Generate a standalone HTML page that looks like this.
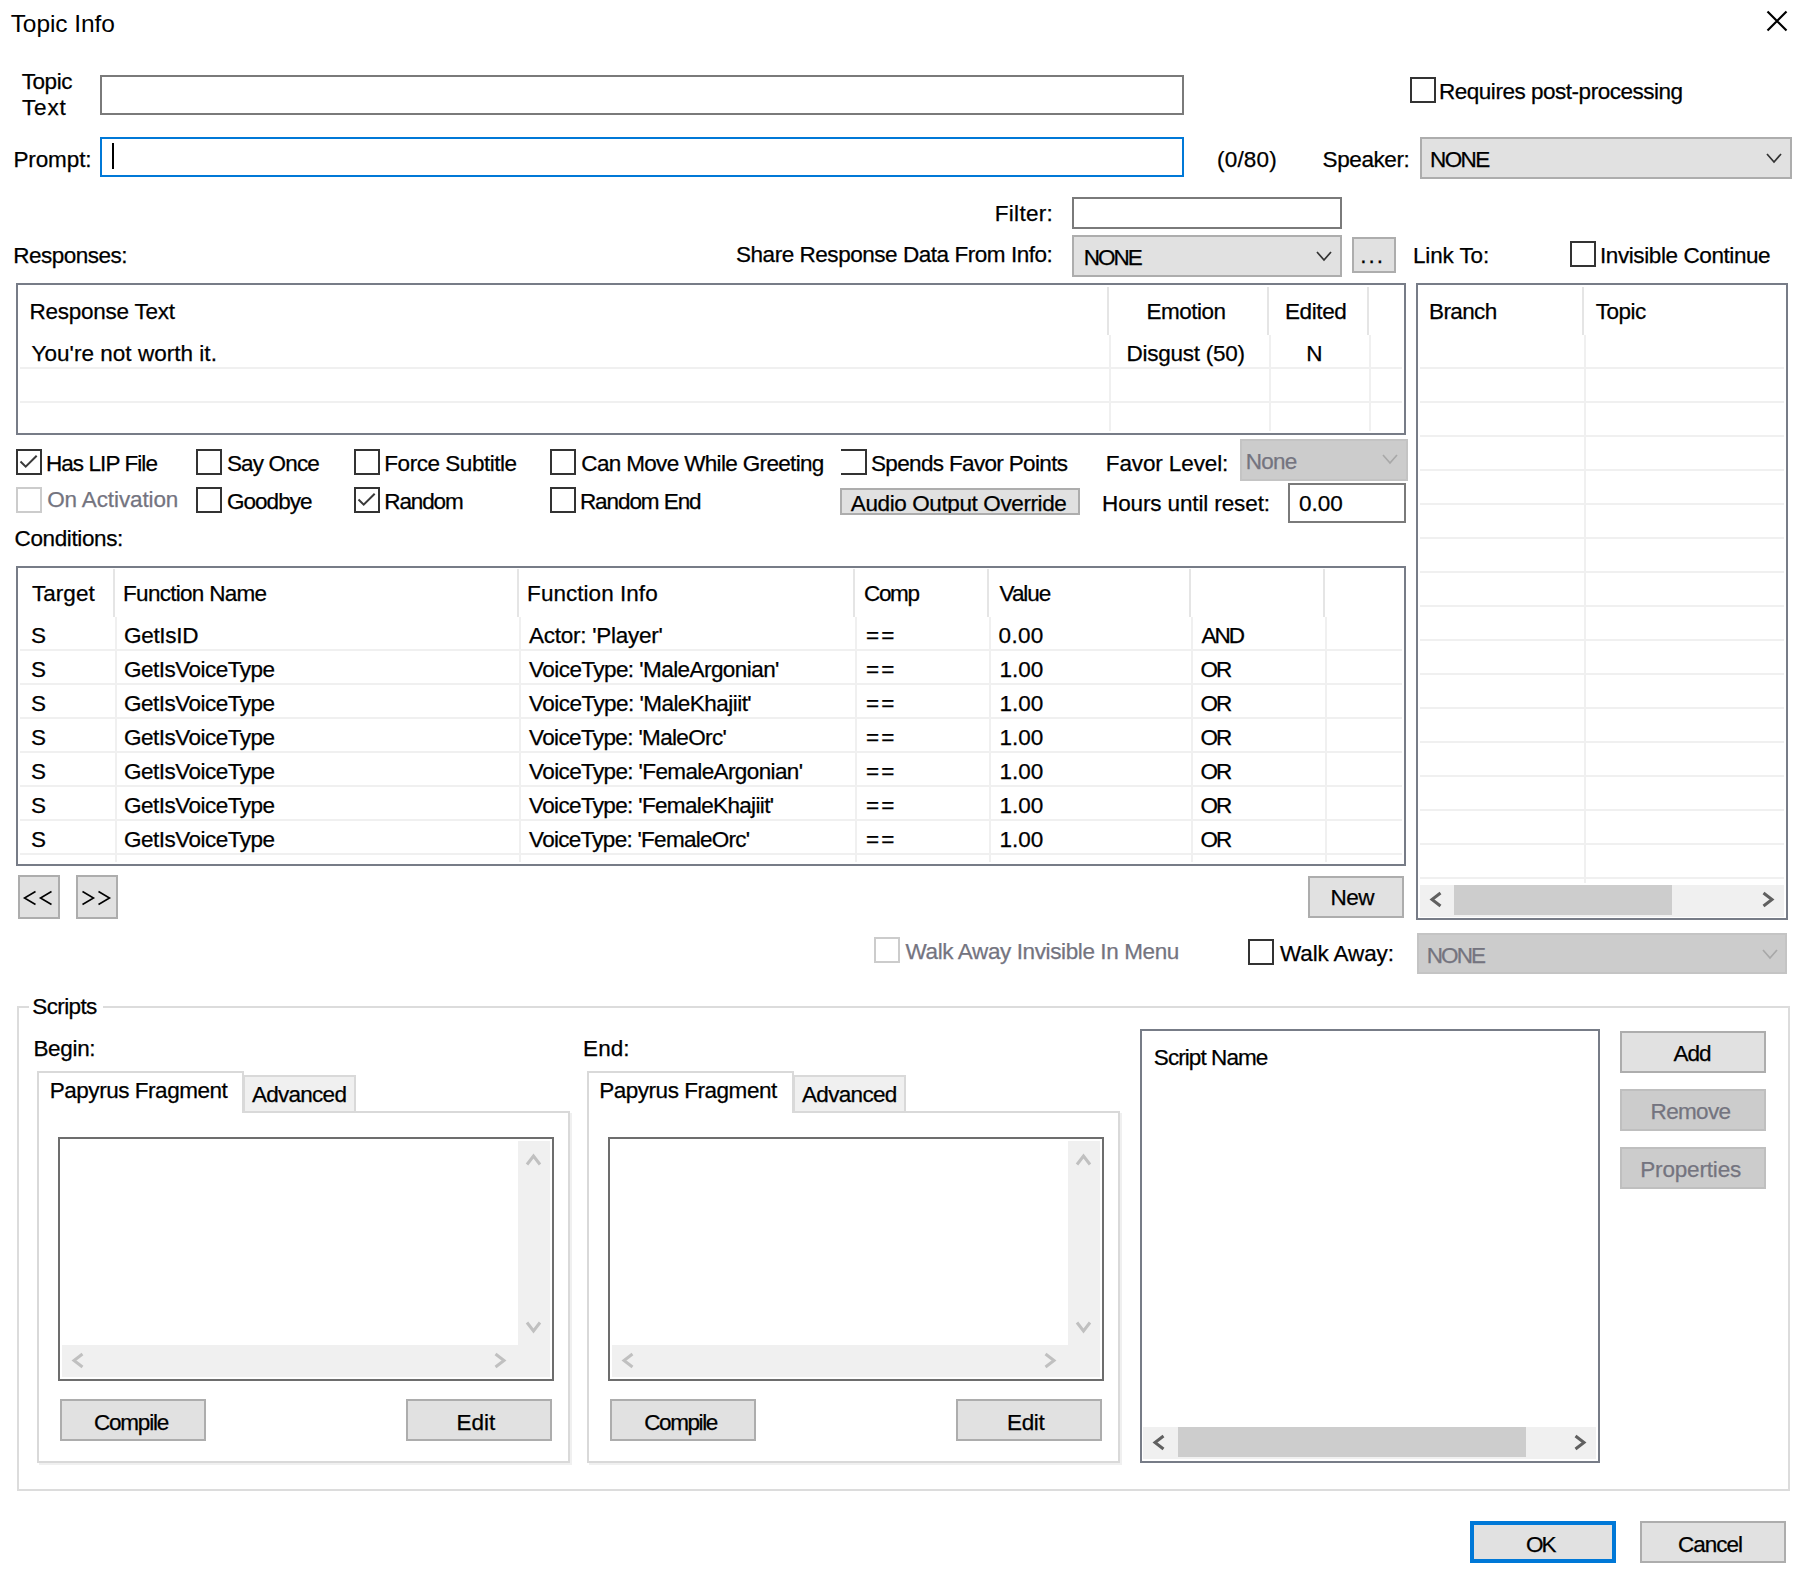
<!DOCTYPE html>
<html><head><meta charset="utf-8"><title>Topic Info</title><style>
html,body{margin:0;padding:0;background:#fff;}
body{width:1802px;height:1585px;position:relative;overflow:hidden;font-family:"Liberation Sans",sans-serif;color:#000;}
.t{position:absolute;font-size:22.5px;line-height:23px;white-space:pre;-webkit-text-stroke-width:0.25px;}
.b{position:absolute;box-sizing:border-box;}
svg.b{overflow:visible;}
</style></head><body>
<div class="t" style="left:10.7px;top:11.2px;font-size:24.5px;line-height:25px;letter-spacing:-0.08px;-webkit-text-stroke-width:0">Topic Info</div>
<svg class="b" style="left:1766px;top:10px" width="22" height="22"><path d="M1.5,1.5 L20.5,20.5 M20.5,1.5 L1.5,20.5" stroke="#000" stroke-width="2.2" fill="none"/></svg>
<div class="b" style="left:100px;top:75px;width:1084px;height:40px;background:#fff;border:2px solid #7a7a7a;"></div>
<div class="b" style="left:1410px;top:77px;width:26px;height:26px;background:#fff;border:2px solid #333333;"></div>
<div class="b" style="left:100px;top:137px;width:1084px;height:40px;background:#fff;border:2px solid #0078d7;"></div>
<div class="b" style="left:112px;top:143px;width:2px;height:26px;background:#000"></div>
<div class="b" style="left:1420px;top:137px;width:372px;height:42px;background:#e1e1e1;border:2px solid #adadad;"></div>
<svg class="b" style="left:1766px;top:153px" width="16" height="11"><polyline points="1,1 8.0,9 15,1" fill="none" stroke="#333" stroke-width="1.7"/></svg>
<div class="b" style="left:1072px;top:197px;width:270px;height:32px;background:#fff;border:2px solid #7a7a7a;"></div>
<div class="b" style="left:1072px;top:235px;width:270px;height:42px;background:#e1e1e1;border:2px solid #adadad;"></div>
<svg class="b" style="left:1316px;top:251px" width="16" height="11"><polyline points="1,1 8.0,9 15,1" fill="none" stroke="#333" stroke-width="1.7"/></svg>
<div class="b" style="left:1352px;top:237px;width:44px;height:36px;background:#e1e1e1;border:2px solid #adadad;"></div>
<div class="b" style="left:1570px;top:241px;width:26px;height:26px;background:#fff;border:2px solid #333333;"></div>
<div class="b" style="left:16px;top:283px;width:1390px;height:152px;background:#fff;border:2px solid #777c87;"></div>
<div class="b" style="left:1107px;top:287px;width:2px;height:48px;background:#e5e5e5"></div>
<div class="b" style="left:1267px;top:287px;width:2px;height:48px;background:#e5e5e5"></div>
<div class="b" style="left:1367px;top:287px;width:2px;height:48px;background:#e5e5e5"></div>
<div class="b" style="left:1109px;top:335px;width:2px;height:96px;background:#f0f0f0"></div>
<div class="b" style="left:1269px;top:335px;width:2px;height:96px;background:#f0f0f0"></div>
<div class="b" style="left:1369px;top:335px;width:2px;height:96px;background:#f0f0f0"></div>
<div class="b" style="left:20px;top:367px;width:1382px;height:2px;background:#f0f0f0"></div>
<div class="b" style="left:20px;top:401px;width:1382px;height:2px;background:#f0f0f0"></div>
<div class="b" style="left:16px;top:449px;width:26px;height:26px;background:#fff;border:2px solid #333333;"></div>
<svg class="b" style="left:16px;top:449px" width="26" height="26"><polyline points="4.5,12.5 9.7,17.7 20.7,6.7" fill="none" stroke="#3a3a3a" stroke-width="2"/></svg>
<div class="b" style="left:196px;top:449px;width:26px;height:26px;background:#fff;border:2px solid #333333;"></div>
<div class="b" style="left:354px;top:449px;width:26px;height:26px;background:#fff;border:2px solid #333333;"></div>
<div class="b" style="left:550px;top:449px;width:26px;height:26px;background:#fff;border:2px solid #333333;"></div>
<div class="b" style="left:841px;top:449px;width:26px;height:26px;background:#fff;border:2px solid #333333;border-left:none;"></div>
<div class="b" style="left:1240px;top:439px;width:168px;height:42px;background:#cccccc;border:2px solid #c4c4c4;"></div>
<svg class="b" style="left:1382px;top:454px" width="16" height="11"><polyline points="1,1 8.0,9 15,1" fill="none" stroke="#a8a8a8" stroke-width="1.7"/></svg>
<div class="b" style="left:16px;top:487px;width:26px;height:26px;background:#fff;border:2px solid #cccccc;"></div>
<div class="b" style="left:196px;top:487px;width:26px;height:26px;background:#fff;border:2px solid #333333;"></div>
<div class="b" style="left:354px;top:487px;width:26px;height:26px;background:#fff;border:2px solid #333333;"></div>
<svg class="b" style="left:354px;top:487px" width="26" height="26"><polyline points="4.5,12.5 9.7,17.7 20.7,6.7" fill="none" stroke="#3a3a3a" stroke-width="2"/></svg>
<div class="b" style="left:550px;top:487px;width:26px;height:26px;background:#fff;border:2px solid #333333;"></div>
<div class="b" style="left:840px;top:488px;width:240px;height:27px;background:#e1e1e1;border:2px solid #adadad;"></div>
<div class="b" style="left:1288px;top:483px;width:118px;height:40px;background:#fff;border:2px solid #7a7a7a;"></div>
<div class="b" style="left:16px;top:566px;width:1390px;height:300px;background:#fff;border:2px solid #777c87;"></div>
<div class="b" style="left:113px;top:569px;width:2px;height:48px;background:#e5e5e5"></div>
<div class="b" style="left:517px;top:569px;width:2px;height:48px;background:#e5e5e5"></div>
<div class="b" style="left:853px;top:569px;width:2px;height:48px;background:#e5e5e5"></div>
<div class="b" style="left:987px;top:569px;width:2px;height:48px;background:#e5e5e5"></div>
<div class="b" style="left:1189px;top:569px;width:2px;height:48px;background:#e5e5e5"></div>
<div class="b" style="left:1323px;top:569px;width:2px;height:48px;background:#e5e5e5"></div>
<div class="b" style="left:115px;top:617px;width:2px;height:245px;background:#f0f0f0"></div>
<div class="b" style="left:519px;top:617px;width:2px;height:245px;background:#f0f0f0"></div>
<div class="b" style="left:855px;top:617px;width:2px;height:245px;background:#f0f0f0"></div>
<div class="b" style="left:989px;top:617px;width:2px;height:245px;background:#f0f0f0"></div>
<div class="b" style="left:1191px;top:617px;width:2px;height:245px;background:#f0f0f0"></div>
<div class="b" style="left:1325px;top:617px;width:2px;height:245px;background:#f0f0f0"></div>
<div class="b" style="left:20px;top:649px;width:1382px;height:2px;background:#f0f0f0"></div>
<div class="b" style="left:20px;top:683px;width:1382px;height:2px;background:#f0f0f0"></div>
<div class="b" style="left:20px;top:717px;width:1382px;height:2px;background:#f0f0f0"></div>
<div class="b" style="left:20px;top:751px;width:1382px;height:2px;background:#f0f0f0"></div>
<div class="b" style="left:20px;top:785px;width:1382px;height:2px;background:#f0f0f0"></div>
<div class="b" style="left:20px;top:819px;width:1382px;height:2px;background:#f0f0f0"></div>
<div class="b" style="left:20px;top:853px;width:1382px;height:2px;background:#f0f0f0"></div>
<div class="b" style="left:18px;top:875px;width:42px;height:44px;background:#e1e1e1;border:2px solid #adadad;"></div>
<div class="b" style="left:76px;top:875px;width:42px;height:44px;background:#e1e1e1;border:2px solid #adadad;"></div>
<svg class="b" style="left:18px;top:875px" width="100" height="44"><g fill="none" stroke="#000" stroke-width="1.6"><polyline points="17.5,16.5 6.5,23 17.5,29.5"/><polyline points="33.5,16.5 22.5,23 33.5,29.5"/><polyline points="64.5,16.5 75.5,23 64.5,29.5"/><polyline points="80.5,16.5 91.5,23 80.5,29.5"/></g></svg>
<div class="b" style="left:1308px;top:876px;width:96px;height:42px;background:#e1e1e1;border:2px solid #adadad;"></div>
<div class="b" style="left:1416px;top:283px;width:372px;height:637px;background:#fff;border:2px solid #777c87;"></div>
<div class="b" style="left:1582px;top:287px;width:2px;height:48px;background:#e5e5e5"></div>
<div class="b" style="left:1584px;top:335px;width:2px;height:548px;background:#f0f0f0"></div>
<div class="b" style="left:1420px;top:367px;width:364px;height:2px;background:#f0f0f0"></div>
<div class="b" style="left:1420px;top:401px;width:364px;height:2px;background:#f0f0f0"></div>
<div class="b" style="left:1420px;top:435px;width:364px;height:2px;background:#f0f0f0"></div>
<div class="b" style="left:1420px;top:469px;width:364px;height:2px;background:#f0f0f0"></div>
<div class="b" style="left:1420px;top:503px;width:364px;height:2px;background:#f0f0f0"></div>
<div class="b" style="left:1420px;top:537px;width:364px;height:2px;background:#f0f0f0"></div>
<div class="b" style="left:1420px;top:571px;width:364px;height:2px;background:#f0f0f0"></div>
<div class="b" style="left:1420px;top:605px;width:364px;height:2px;background:#f0f0f0"></div>
<div class="b" style="left:1420px;top:639px;width:364px;height:2px;background:#f0f0f0"></div>
<div class="b" style="left:1420px;top:673px;width:364px;height:2px;background:#f0f0f0"></div>
<div class="b" style="left:1420px;top:707px;width:364px;height:2px;background:#f0f0f0"></div>
<div class="b" style="left:1420px;top:741px;width:364px;height:2px;background:#f0f0f0"></div>
<div class="b" style="left:1420px;top:775px;width:364px;height:2px;background:#f0f0f0"></div>
<div class="b" style="left:1420px;top:809px;width:364px;height:2px;background:#f0f0f0"></div>
<div class="b" style="left:1420px;top:843px;width:364px;height:2px;background:#f0f0f0"></div>
<div class="b" style="left:1420px;top:877px;width:364px;height:2px;background:#f0f0f0"></div>
<div class="b" style="left:1420px;top:885px;width:364px;height:32px;background:#f0f0f0"></div>
<div class="b" style="left:1454px;top:885px;width:218px;height:30px;background:#cdcdcd"></div>
<svg class="b" style="left:1430px;top:892px" width="12" height="15"><polyline points="10.5,1 2,7.5 10.5,14" fill="none" stroke="#606060" stroke-width="3"/></svg>
<svg class="b" style="left:1762px;top:892px" width="12" height="15"><polyline points="1.5,1 10,7.5 1.5,14" fill="none" stroke="#606060" stroke-width="3"/></svg>
<div class="b" style="left:874px;top:937px;width:26px;height:26px;background:#fff;border:2px solid #cccccc;"></div>
<div class="b" style="left:1248px;top:939px;width:26px;height:26px;background:#fff;border:2px solid #333333;"></div>
<div class="b" style="left:1417px;top:933px;width:370px;height:41px;background:#cccccc;border:2px solid #c4c4c4;"></div>
<svg class="b" style="left:1762px;top:949px" width="16" height="11"><polyline points="1,1 8.0,9 15,1" fill="none" stroke="#a8a8a8" stroke-width="1.7"/></svg>
<div class="b" style="left:17px;top:1006px;width:1773px;height:485px;background:transparent;border:2px solid #dcdcdc;"></div>
<div class="b" style="left:29px;top:995px;width:74px;height:15px;background:#fff"></div>
<div class="b" style="left:37px;top:1111px;width:533px;height:352px;background:transparent;border:2px solid #d9d9d9;box-shadow:2px 2px 0 #f0f0f0;"></div>
<div class="b" style="left:243px;top:1075px;width:113px;height:38px;background:#f0f0f0;border:2px solid #d9d9d9;"></div>
<div class="b" style="left:37px;top:1071px;width:207px;height:42px;background:#fff;border:2px solid #d9d9d9;border-bottom:none"></div>
<div class="b" style="left:58px;top:1137px;width:496px;height:244px;background:#fff;border:2px solid #6d6d6d;"></div>
<div class="b" style="left:518px;top:1141px;width:32px;height:236px;background:#f0f0f0"></div>
<div class="b" style="left:62px;top:1345px;width:488px;height:32px;background:#f0f0f0"></div>
<svg class="b" style="left:526px;top:1154px" width="15" height="12"><polyline points="1,10.5 7.5,2 14,10.5" fill="none" stroke="#c0c0c0" stroke-width="3"/></svg>
<svg class="b" style="left:526px;top:1321px" width="15" height="12"><polyline points="1,1.5 7.5,10 14,1.5" fill="none" stroke="#c0c0c0" stroke-width="3"/></svg>
<svg class="b" style="left:72px;top:1353px" width="12" height="15"><polyline points="10.5,1 2,7.5 10.5,14" fill="none" stroke="#c0c0c0" stroke-width="3"/></svg>
<svg class="b" style="left:494px;top:1353px" width="12" height="15"><polyline points="1.5,1 10,7.5 1.5,14" fill="none" stroke="#c0c0c0" stroke-width="3"/></svg>
<div class="b" style="left:60px;top:1399px;width:146px;height:42px;background:#e1e1e1;border:2px solid #adadad;"></div>
<div class="b" style="left:406px;top:1399px;width:146px;height:42px;background:#e1e1e1;border:2px solid #adadad;"></div>
<div class="b" style="left:587px;top:1111px;width:533px;height:352px;background:transparent;border:2px solid #d9d9d9;box-shadow:2px 2px 0 #f0f0f0;"></div>
<div class="b" style="left:793px;top:1075px;width:113px;height:38px;background:#f0f0f0;border:2px solid #d9d9d9;"></div>
<div class="b" style="left:587px;top:1071px;width:207px;height:42px;background:#fff;border:2px solid #d9d9d9;border-bottom:none"></div>
<div class="b" style="left:608px;top:1137px;width:496px;height:244px;background:#fff;border:2px solid #6d6d6d;"></div>
<div class="b" style="left:1068px;top:1141px;width:32px;height:236px;background:#f0f0f0"></div>
<div class="b" style="left:612px;top:1345px;width:488px;height:32px;background:#f0f0f0"></div>
<svg class="b" style="left:1076px;top:1154px" width="15" height="12"><polyline points="1,10.5 7.5,2 14,10.5" fill="none" stroke="#c0c0c0" stroke-width="3"/></svg>
<svg class="b" style="left:1076px;top:1321px" width="15" height="12"><polyline points="1,1.5 7.5,10 14,1.5" fill="none" stroke="#c0c0c0" stroke-width="3"/></svg>
<svg class="b" style="left:622px;top:1353px" width="12" height="15"><polyline points="10.5,1 2,7.5 10.5,14" fill="none" stroke="#c0c0c0" stroke-width="3"/></svg>
<svg class="b" style="left:1044px;top:1353px" width="12" height="15"><polyline points="1.5,1 10,7.5 1.5,14" fill="none" stroke="#c0c0c0" stroke-width="3"/></svg>
<div class="b" style="left:610px;top:1399px;width:146px;height:42px;background:#e1e1e1;border:2px solid #adadad;"></div>
<div class="b" style="left:956px;top:1399px;width:146px;height:42px;background:#e1e1e1;border:2px solid #adadad;"></div>
<div class="b" style="left:1140px;top:1029px;width:460px;height:434px;background:#fff;border:2px solid #777c87;"></div>
<div class="b" style="left:1143px;top:1427px;width:453px;height:32px;background:#f0f0f0"></div>
<div class="b" style="left:1178px;top:1427px;width:348px;height:30px;background:#cdcdcd"></div>
<svg class="b" style="left:1153px;top:1435px" width="12" height="15"><polyline points="10.5,1 2,7.5 10.5,14" fill="none" stroke="#606060" stroke-width="3"/></svg>
<svg class="b" style="left:1574px;top:1435px" width="12" height="15"><polyline points="1.5,1 10,7.5 1.5,14" fill="none" stroke="#606060" stroke-width="3"/></svg>
<div class="b" style="left:1620px;top:1031px;width:146px;height:42px;background:#e1e1e1;border:2px solid #adadad;"></div>
<div class="b" style="left:1620px;top:1089px;width:146px;height:42px;background:#cccccc;border:2px solid #bfbfbf;"></div>
<div class="b" style="left:1620px;top:1147px;width:146px;height:42px;background:#cccccc;border:2px solid #bfbfbf;"></div>
<div class="b" style="left:1470px;top:1521px;width:146px;height:42px;background:#e1e1e1;border:4px solid #0078d7;"></div>
<div class="b" style="left:1640px;top:1521px;width:146px;height:42px;background:#e1e1e1;border:2px solid #adadad;"></div>
<div class="t" style="left:21.8px;top:70.0px;letter-spacing:-0.47px;">Topic</div>
<div class="t" style="left:22.0px;top:96.0px;letter-spacing:0.87px;">Text</div>
<div class="t" style="left:13.4px;top:148.0px;letter-spacing:-0.10px;">Prompt:</div>
<div class="t" style="left:1439.0px;top:80.0px;letter-spacing:-0.48px;">Requires post-processing</div>
<div class="t" style="left:1217.0px;top:147.5px;letter-spacing:0.20px;">(0/80)</div>
<div class="t" style="left:1322.6px;top:147.5px;letter-spacing:-0.41px;">Speaker:</div>
<div class="t" style="left:1430.0px;top:148.0px;letter-spacing:-1.60px;">NONE</div>
<div class="t" style="left:994.7px;top:202.0px;letter-spacing:0.32px;">Filter:</div>
<div class="t" style="left:13.3px;top:244.0px;letter-spacing:-0.51px;">Responses:</div>
<div class="t" style="left:736.0px;top:243.0px;letter-spacing:-0.46px;">Share Response Data From Info:</div>
<div class="t" style="left:1083.8px;top:246.0px;letter-spacing:-2.00px;">NONE</div>
<div class="t" style="left:1360.3px;top:244.0px;letter-spacing:2.00px;">...</div>
<div class="t" style="left:1413.0px;top:243.5px;letter-spacing:-0.14px;">Link To:</div>
<div class="t" style="left:1600.0px;top:243.5px;letter-spacing:-0.41px;">Invisible Continue</div>
<div class="t" style="left:29.5px;top:300.0px;letter-spacing:-0.25px;">Response Text</div>
<div class="t" style="left:1146.6px;top:300.0px;letter-spacing:-0.50px;">Emotion</div>
<div class="t" style="left:1285.0px;top:300.0px;letter-spacing:-0.40px;">Edited</div>
<div class="t" style="left:31.5px;top:341.5px;letter-spacing:0.03px;">You&#x27;re not worth it.</div>
<div class="t" style="left:1126.5px;top:341.5px;letter-spacing:-0.25px;">Disgust (50)</div>
<div class="t" style="left:1306.3px;top:341.5px;letter-spacing:0.00px;">N</div>
<div class="t" style="left:45.9px;top:452.0px;letter-spacing:-0.92px;">Has LIP File</div>
<div class="t" style="left:226.9px;top:452.0px;letter-spacing:-0.84px;">Say Once</div>
<div class="t" style="left:384.3px;top:452.0px;letter-spacing:-0.46px;">Force Subtitle</div>
<div class="t" style="left:581.3px;top:452.0px;letter-spacing:-0.66px;">Can Move While Greeting</div>
<div class="t" style="left:871.0px;top:452.0px;letter-spacing:-0.66px;">Spends Favor Points</div>
<div class="t" style="left:1105.8px;top:452.0px;letter-spacing:-0.12px;">Favor Level:</div>
<div class="t" style="left:1245.8px;top:450.0px;letter-spacing:-0.77px;color:#74747f;">None</div>
<div class="t" style="left:47.2px;top:488.0px;letter-spacing:-0.12px;color:#74747f;">On Activation</div>
<div class="t" style="left:226.9px;top:490.0px;letter-spacing:-0.95px;">Goodbye</div>
<div class="t" style="left:384.3px;top:490.0px;letter-spacing:-1.14px;">Random</div>
<div class="t" style="left:579.9px;top:490.0px;letter-spacing:-1.07px;">Random End</div>
<div class="t" style="left:1102.0px;top:492.0px;letter-spacing:-0.12px;">Hours until reset:</div>
<div class="t" style="left:1299.0px;top:492.0px;letter-spacing:0.00px;">0.00</div>
<div class="t" style="left:14.5px;top:527.0px;letter-spacing:-0.37px;">Conditions:</div>
<div class="t" style="left:31.9px;top:581.5px;letter-spacing:0.06px;">Target</div>
<div class="t" style="left:123.1px;top:581.5px;letter-spacing:-0.72px;">Function Name</div>
<div class="t" style="left:527.1px;top:581.5px;letter-spacing:0.04px;">Function Info</div>
<div class="t" style="left:864.0px;top:581.5px;letter-spacing:-1.37px;">Comp</div>
<div class="t" style="left:999.6px;top:581.5px;letter-spacing:-1.05px;">Value</div>
<div class="t" style="left:30.9px;top:623.5px;letter-spacing:0.00px;">S</div>
<div class="t" style="left:124.1px;top:623.5px;letter-spacing:-0.33px;">GetIsID</div>
<div class="t" style="left:529.1px;top:623.5px;letter-spacing:-0.26px;">Actor: &#x27;Player&#x27;</div>
<div class="t" style="left:866.0px;top:623.5px;letter-spacing:2.00px;">==</div>
<div class="t" style="left:998.6px;top:623.5px;letter-spacing:0.27px;">0.00</div>
<div class="t" style="left:1201.4px;top:623.5px;letter-spacing:-2.00px;">AND</div>
<div class="t" style="left:30.9px;top:657.5px;letter-spacing:0.00px;">S</div>
<div class="t" style="left:124.1px;top:657.5px;letter-spacing:-0.52px;">GetIsVoiceType</div>
<div class="t" style="left:529.1px;top:657.5px;letter-spacing:-0.56px;">VoiceType: &#x27;MaleArgonian&#x27;</div>
<div class="t" style="left:866.0px;top:657.5px;letter-spacing:2.00px;">==</div>
<div class="t" style="left:999.4px;top:657.5px;letter-spacing:0.00px;">1.00</div>
<div class="t" style="left:1200.4px;top:657.5px;letter-spacing:-2.00px;">OR</div>
<div class="t" style="left:30.9px;top:691.5px;letter-spacing:0.00px;">S</div>
<div class="t" style="left:124.1px;top:691.5px;letter-spacing:-0.52px;">GetIsVoiceType</div>
<div class="t" style="left:529.1px;top:691.5px;letter-spacing:-0.54px;">VoiceType: &#x27;MaleKhajiit&#x27;</div>
<div class="t" style="left:866.0px;top:691.5px;letter-spacing:2.00px;">==</div>
<div class="t" style="left:999.4px;top:691.5px;letter-spacing:0.00px;">1.00</div>
<div class="t" style="left:1200.4px;top:691.5px;letter-spacing:-2.00px;">OR</div>
<div class="t" style="left:30.9px;top:725.5px;letter-spacing:0.00px;">S</div>
<div class="t" style="left:124.1px;top:725.5px;letter-spacing:-0.52px;">GetIsVoiceType</div>
<div class="t" style="left:529.1px;top:725.5px;letter-spacing:-0.64px;">VoiceType: &#x27;MaleOrc&#x27;</div>
<div class="t" style="left:866.0px;top:725.5px;letter-spacing:2.00px;">==</div>
<div class="t" style="left:999.4px;top:725.5px;letter-spacing:0.00px;">1.00</div>
<div class="t" style="left:1200.4px;top:725.5px;letter-spacing:-2.00px;">OR</div>
<div class="t" style="left:30.9px;top:759.5px;letter-spacing:0.00px;">S</div>
<div class="t" style="left:124.1px;top:759.5px;letter-spacing:-0.52px;">GetIsVoiceType</div>
<div class="t" style="left:529.1px;top:759.5px;letter-spacing:-0.62px;">VoiceType: &#x27;FemaleArgonian&#x27;</div>
<div class="t" style="left:866.0px;top:759.5px;letter-spacing:2.00px;">==</div>
<div class="t" style="left:999.4px;top:759.5px;letter-spacing:0.00px;">1.00</div>
<div class="t" style="left:1200.4px;top:759.5px;letter-spacing:-2.00px;">OR</div>
<div class="t" style="left:30.9px;top:793.5px;letter-spacing:0.00px;">S</div>
<div class="t" style="left:124.1px;top:793.5px;letter-spacing:-0.52px;">GetIsVoiceType</div>
<div class="t" style="left:529.1px;top:793.5px;letter-spacing:-0.65px;">VoiceType: &#x27;FemaleKhajiit&#x27;</div>
<div class="t" style="left:866.0px;top:793.5px;letter-spacing:2.00px;">==</div>
<div class="t" style="left:999.4px;top:793.5px;letter-spacing:0.00px;">1.00</div>
<div class="t" style="left:1200.4px;top:793.5px;letter-spacing:-2.00px;">OR</div>
<div class="t" style="left:30.9px;top:827.5px;letter-spacing:0.00px;">S</div>
<div class="t" style="left:124.1px;top:827.5px;letter-spacing:-0.52px;">GetIsVoiceType</div>
<div class="t" style="left:529.1px;top:827.5px;letter-spacing:-0.72px;">VoiceType: &#x27;FemaleOrc&#x27;</div>
<div class="t" style="left:866.0px;top:827.5px;letter-spacing:2.00px;">==</div>
<div class="t" style="left:999.4px;top:827.5px;letter-spacing:0.00px;">1.00</div>
<div class="t" style="left:1200.4px;top:827.5px;letter-spacing:-2.00px;">OR</div>
<div class="t" style="left:1330.4px;top:885.5px;letter-spacing:-0.50px;">New</div>
<div class="t" style="left:1429.0px;top:300.0px;letter-spacing:-0.62px;">Branch</div>
<div class="t" style="left:1595.8px;top:300.0px;letter-spacing:-0.50px;">Topic</div>
<div class="t" style="left:905.6px;top:940.0px;letter-spacing:-0.39px;color:#74747f;">Walk Away Invisible In Menu</div>
<div class="t" style="left:1280.0px;top:942.3px;letter-spacing:-0.12px;">Walk Away:</div>
<div class="t" style="left:1426.8px;top:943.8px;letter-spacing:-1.93px;color:#74747f;">NONE</div>
<div class="t" style="left:32.3px;top:995.2px;letter-spacing:-0.62px;">Scripts</div>
<div class="t" style="left:33.4px;top:1037.3px;letter-spacing:-0.32px;">Begin:</div>
<div class="t" style="left:583.1px;top:1037.3px;letter-spacing:0.03px;">End:</div>
<div class="t" style="left:49.7px;top:1079.0px;letter-spacing:-0.46px;">Papyrus Fragment</div>
<div class="t" style="left:252.0px;top:1083.4px;letter-spacing:-0.74px;">Advanced</div>
<div class="t" style="left:599.2px;top:1079.0px;letter-spacing:-0.47px;">Papyrus Fragment</div>
<div class="t" style="left:802.0px;top:1083.4px;letter-spacing:-0.67px;">Advanced</div>
<div class="t" style="left:94.0px;top:1410.6px;letter-spacing:-1.22px;">Compile</div>
<div class="t" style="left:456.4px;top:1410.6px;letter-spacing:0.00px;">Edit</div>
<div class="t" style="left:644.3px;top:1410.6px;letter-spacing:-1.43px;">Compile</div>
<div class="t" style="left:1007.0px;top:1410.6px;letter-spacing:-0.33px;">Edit</div>
<div class="t" style="left:1153.8px;top:1046.1px;letter-spacing:-0.92px;">Script Name</div>
<div class="t" style="left:1673.4px;top:1041.6px;letter-spacing:-0.95px;">Add</div>
<div class="t" style="left:1650.6px;top:1100.0px;letter-spacing:-0.68px;color:#74747f;">Remove</div>
<div class="t" style="left:1640.3px;top:1158.0px;letter-spacing:-0.18px;color:#74747f;">Properties</div>
<div class="t" style="left:1525.9px;top:1532.5px;letter-spacing:-2.00px;">OK</div>
<div class="t" style="left:1678.0px;top:1532.5px;letter-spacing:-1.02px;">Cancel</div>
<div class="b" style="left:842px;top:490px;width:236px;height:23px;overflow:hidden"><div class="t" style="left:8.8px;top:2.0px;letter-spacing:-0.39px">Audio Output Override</div></div>
</body></html>
